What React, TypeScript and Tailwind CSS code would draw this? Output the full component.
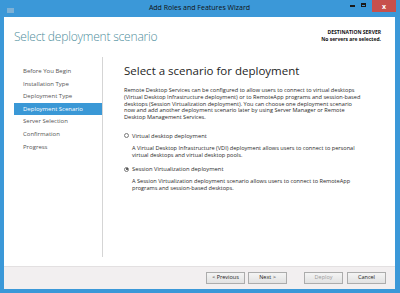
import React from "react";

const ui = { fontFamily: '"Open Sans", "Noto Sans", sans-serif' };

const steps = [
  "Before You Begin",
  "Installation Type",
  "Deployment Type",
  "Deployment Scenario",
  "Server Selection",
  "Confirmation",
  "Progress",
];

function Radio({ checked }: { checked?: boolean }) {
  return (
    <span className="relative inline-block h-[5px] w-[5px] shrink-0 rounded-full border border-[#7a7a7a] bg-white">
      {checked && <span className="absolute left-[0.5px] top-[0.5px] h-[2px] w-[2px] rounded-full bg-[#333]" />}
    </span>
  );
}

function WizButton({ label, disabled, className = "" }: { label: string; disabled?: boolean; className?: string }) {
  return (
    <button
      className={`h-[12px] w-[39px] border border-[#acacac] bg-gradient-to-b from-[#f4f4f4] to-[#e2e2e2] text-[5.5px] leading-none ${
        disabled ? "text-[#9b9b9b]" : "text-[#222]"
      } ${className}`}
    >
      {label}
    </button>
  );
}

export default function App() {
  return (
    <div style={ui} className="flex h-[293px] w-[400px] flex-col bg-[#3b98d8] pl-[4px] pr-[5px] pb-[4px]">
      {/* Title bar */}
      <div className="relative flex h-[17px] shrink-0 items-center">
        <div className="ml-[3px] mt-[3px] h-[5px] w-[7px] bg-[#8fb8d6] opacity-80" />
        <div className="absolute inset-x-0 top-[1px] text-center text-[7px] leading-[14px] text-[#111]">
          Add Roles and Features Wizard
        </div>
        <div className="ml-auto flex h-full items-start">
          <div className="mt-[5px] h-[1.5px] w-[5px] bg-[#1a1a1a]" />
          <div className="ml-[6px] mt-[3px] h-[4px] w-[5px] border border-t-2 border-[#1a1a1a]" />
          <div className="-mr-[1px] ml-[6px] flex h-[12px] w-[24px] items-center justify-center bg-[#c7504c] text-[7px] font-bold leading-none text-white">
            x
          </div>
        </div>
      </div>

      {/* Client area */}
      <div className="flex flex-1 flex-col bg-white">
        <div className="flex h-[40px] shrink-0 items-start justify-between pl-[10px] pr-[14px]">
          <div className="mt-[11px] text-[12px] font-light leading-[18px] tracking-[-0.2px] text-[#4d8d9b]">
            Select deployment scenario
          </div>
          <div className="mt-[12px] text-right text-[5px] font-bold leading-[7px] text-[#111]">
            <div>DESTINATION SERVER</div>
            <div>No servers are selected.</div>
          </div>
        </div>

        <div className="flex flex-1 pb-[9px]">
          <nav className="w-[99px] shrink-0 border-r border-[#d5d5d5] pt-[8px]">
            {steps.map((s) => (
              <div
                key={s}
                className={`ml-[10px] h-[12.6px] pl-[9px] text-[6px] leading-[12.6px] ${
                  s === "Deployment Scenario" ? "bg-[#3a98d6] text-white" : "text-[#555]"
                }`}
              >
                {s}
              </div>
            ))}
          </nav>

          <main className="flex-1 pl-[21px] pt-[7px] text-[#2a2a2a]">
            <h2 className="text-[11.5px] leading-[14px] text-[#1e1e1e]">Select a scenario for deployment</h2>
            <p className="mt-[9px] whitespace-nowrap text-[5.6px] leading-[6.8px]">
              Remote Desktop Services can be configured to allow users to connect to virtual desktops
              <br />
              (Virtual Desktop Infrastructure deployment) or to RemoteApp programs and session-based
              <br />
              desktops (Session Virtualization deployment). You can choose one deployment scenario
              <br />
              now and add another deployment scenario later by using Server Manager or Remote
              <br />
              Desktop Management Services.
            </p>

            <label className="mt-[11px] flex items-center gap-[3px] text-[5.8px] leading-[8px]">
              <Radio />
              Virtual desktop deployment
            </label>
            <p className="ml-[8px] mt-[5.5px] whitespace-nowrap text-[5.6px] leading-[6.8px]">
              A Virtual Desktop Infrastructure (VDI) deployment allows users to connect to personal
              <br />
              virtual desktops and virtual desktop pools.
            </p>

            <label className="mt-[6px] flex items-center gap-[3px] text-[5.8px] leading-[8px]">
              <Radio checked />
              Session Virtualization deployment
            </label>
            <p className="ml-[8px] mt-[5px] whitespace-nowrap text-[5.6px] leading-[6.8px]">
              A Session Virtualization deployment scenario allows users to connect to RemoteApp
              <br />
              programs and session-based desktops.
            </p>
          </main>
        </div>

        <footer className="flex h-[23px] shrink-0 items-center justify-end border-t border-[#e3e0e1] bg-[#f2eff0] pr-[9px]">
          <WizButton label="< Previous" />
          <WizButton label="Next >" className="ml-[3px]" />
          <WizButton label="Deploy" disabled className="ml-[17px]" />
          <WizButton label="Cancel" className="ml-[4px]" />
        </footer>
      </div>
    </div>
  );
}
